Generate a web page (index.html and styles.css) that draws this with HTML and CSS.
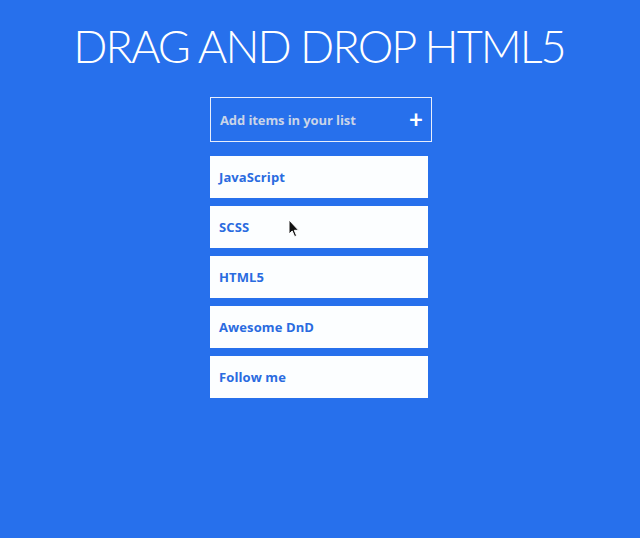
FILE: index.html
```html
<!DOCTYPE html>
<html>
<head>
<meta charset="utf-8">
<link rel="stylesheet" href="styles.css">
</head>
<body>
<main class="app">
  <h1 class="title">DRAG AND DROP HTML5</h1>
  <div class="adder">
    <span class="placeholder">Add items in your list</span>
    <span class="plus">+</span>
  </div>
  <ul class="list">
    <li class="item">JavaScript</li>
    <li class="item">SCSS</li>
    <li class="item">HTML5</li>
    <li class="item">Awesome DnD</li>
    <li class="item">Follow me</li>
  </ul>
  <svg class="cursor" width="12" height="19" viewBox="0 0 12 19"><path d="M1 1 L1 15 L4.2 12 L6.6 17.6 L8.6 16.7 L6.3 11.3 L10.6 11.3 Z" fill="#111" stroke="#fff" stroke-width="1"/></svg>
</main>
</body>
</html>
```
FILE: styles.css
```css
html, body {
  margin: 0;
  padding: 0;
}
body {
  background: #2770ec;
  width: 640px;
  height: 538px;
  overflow: hidden;
  font-family: "Open Sans", "Lato", sans-serif;
}
.app {
  position: relative;
  display: flex;
  flex-direction: column;
  align-items: center;
  padding-top: 20px;
}
.title {
  margin: 0 0 0 -2px;
  color: #fff;
  font-family: "Lato", sans-serif;
  font-weight: 300;
  font-size: 45px;
  line-height: 52px;
  letter-spacing: -1.9px;
}
.adder {
  margin-top: 25px;
  margin-left: 2px;
  width: 222px;
  height: 45px;
  box-sizing: border-box;
  border: 1px solid #e8eefc;
  display: flex;
  align-items: center;
  justify-content: space-between;
  padding: 0 8px 0 9px;
}
.placeholder {
  color: #c9d4e8;
  font-weight: 700;
  font-size: 13px;
  letter-spacing: -0.1px;
}
.plus {
  color: #fff;
  font-family: "Lato", sans-serif;
  font-weight: 700;
  font-size: 24px;
  line-height: 1;
  margin-top: -2px;
}
.list {
  list-style: none;
  margin: 14px 2px 0 0;
  padding: 0;
  display: flex;
  flex-direction: column;
  gap: 8px;
}
.item {
  width: 218px;
  height: 42px;
  box-sizing: border-box;
  background: #fcfeff;
  color: #2a6be0;
  font-weight: 700;
  font-size: 13px;
  letter-spacing: 0.1px;
  display: flex;
  align-items: center;
  padding-left: 9px;
}
.cursor {
  position: absolute;
  left: 288px;
  top: 219px;
}
```
